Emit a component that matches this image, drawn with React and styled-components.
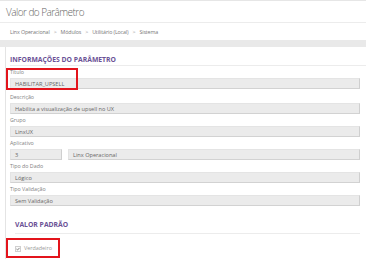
import React from "react";
import styled, { createGlobalStyle } from "styled-components";

const Global = createGlobalStyle`
  html, body { margin: 0; padding: 0; background: #fff; }
  body { font-family: "Open Sans", "Liberation Sans", sans-serif; }
  * { box-sizing: border-box; }
`;

const Page = styled.div`
  width: 366px;
  height: 259px;
  overflow: hidden;
  background: #fff;
  border-top: 1px solid #e6e6e6;
`;

const TitleBar = styled.div`
  height: 22px;
  display: flex;
  align-items: center;
  padding: 0 6px;
  border-bottom: 1px solid #ececec;
`;

const Title = styled.h1`
  margin: 0;
  font-size: 10px;
  font-weight: 300;
  letter-spacing: -0.55px;
  color: #666;
`;

const Breadcrumb = styled.div`
  height: 17px;
  display: flex;
  align-items: center;
  padding-left: 10px;
  font-size: 5.3px;
  color: #777;
  letter-spacing: -0.12px;
  gap: 4px;
`;

const Sep = styled.span`
  color: #999;
`;

const Band = styled.div`
  height: 7px;
  background: #e9e9e9;
`;

const Card = styled.div`
  margin-left: 5px;
  border-left: 1px solid #e4e4e4;
  padding-left: 4px;
  height: 212px;
`;

const SectionHeader = styled.div`
  padding-top: 9px;
  padding-bottom: 1px;
  line-height: 8px;
  font-size: 6.8px;
  font-weight: 700;
  color: #6b5196;
  border-bottom: 1px solid #ececec;
`;

const Body = styled.div`
  padding-right: 6px;
`;

const Field = styled.div`
  position: relative;
  margin-bottom: ${(p) => p.$gap || 0}px;
`;

const Label = styled.div`
  font-size: 5.3px;
  line-height: 8px;
  padding-top: 2px;
  margin-bottom: 2px;
  color: #808080;
`;

const Inputs = styled.div`
  display: flex;
  gap: 6px;
`;

const Input = styled.div`
  height: 11px;
  flex: ${(p) => (p.$w ? `0 0 ${p.$w}px` : "1")};
  background: #ebebeb;
  border: 1px solid #e4e4e4;
  border-right-color: #cfcfcf;
  border-bottom-color: #d2d2d2;
  font-size: 5.6px;
  color: #666;
  display: flex;
  align-items: center;
  padding-left: 4px;
`;

const Highlight = styled.div`
  position: absolute;
  left: ${(p) => p.$l}px;
  top: ${(p) => p.$t}px;
  width: ${(p) => p.$w}px;
  height: ${(p) => p.$h}px;
  border: 2px solid #e3141c;
  pointer-events: none;
`;

const SubSection = styled.div`
  margin-top: 15px;
  padding-left: 5px;
`;

const SubHeader = styled.div`
  line-height: 8px;
  padding-bottom: 4px;
  font-size: 6.8px;
  font-weight: 700;
  color: #6b5196;
  border-bottom: 1px solid #ececec;
`;

const CheckRow = styled.div`
  position: relative;
  padding-top: 10px;
  display: flex;
  align-items: center;
  gap: 3px;
  line-height: 9px;
`;

const Box = styled.span`
  width: 6px;
  height: 6px;
  border: 1px solid #cfcfcf;
  background: #fafafa;
  display: inline-flex;
  align-items: center;
  justify-content: center;
`;

const CheckText = styled.span`
  font-size: 5.4px;
  color: #999;
`;

export default function App() {
  return (
    <>
      <Global />
      <Page>
        <TitleBar>
          <Title>Valor do Parâmetro</Title>
        </TitleBar>
        <Breadcrumb>
          <span>Linx Operacional</span>
          <Sep>&gt;</Sep>
          <span>Módulos</span>
          <Sep>&gt;</Sep>
          <span>Utilitário (Local)</span>
          <Sep>&gt;</Sep>
          <span>Sistema</span>
        </Breadcrumb>
        <Band />
        <Card>
          <SectionHeader>INFORMAÇÕES DO PARÂMETRO</SectionHeader>
          <Body>
            <Field $gap={2}>
              <Label>Título</Label>
              <Inputs>
                <Input>HABILITAR_UPSELL</Input>
              </Inputs>
              <Highlight $l={-4} $t={2} $w={72} $h={22} />
            </Field>
            <Field>
              <Label>Descrição</Label>
              <Inputs>
                <Input>Habilita a visualização de upsell no UX</Input>
              </Inputs>
            </Field>
            <Field>
              <Label>Grupo</Label>
              <Inputs>
                <Input>LinxUX</Input>
              </Inputs>
            </Field>
            <Field>
              <Label>Aplicativo</Label>
              <Inputs>
                <Input $w={52}>3</Input>
                <Input>Linx Operacional</Input>
              </Inputs>
            </Field>
            <Field>
              <Label>Tipo do Dado</Label>
              <Inputs>
                <Input>Lógico</Input>
              </Inputs>
            </Field>
            <Field>
              <Label>Tipo Validação</Label>
              <Inputs>
                <Input>Sem Validação</Input>
              </Inputs>
            </Field>
            <SubSection>
              <SubHeader>VALOR PADRÃO</SubHeader>
              <CheckRow>
                <Box>
                  <svg width="5" height="4" viewBox="0 0 5 4">
                    <path d="M0.6 2.1 L1.9 3.3 L4.4 0.6" fill="none" stroke="#555" strokeWidth="0.9" />
                  </svg>
                </Box>
                <CheckText>Verdadeiro</CheckText>
                <Highlight $l={-9} $t={4} $w={54} $h={20} />
              </CheckRow>
            </SubSection>
          </Body>
        </Card>
      </Page>
    </>
  );
}
